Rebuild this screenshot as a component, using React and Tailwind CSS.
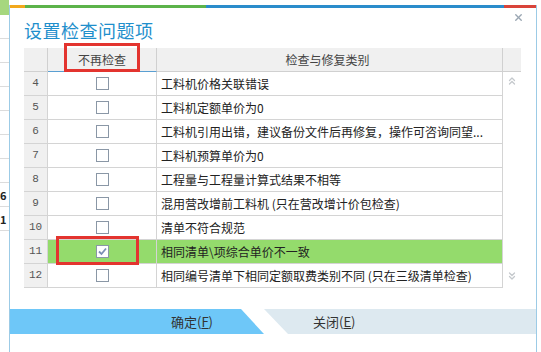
import { ChevronsUp, ChevronsDown, X } from 'lucide-react';

const rows = [
  { n: 4, text: '工料机价格关联错误' },
  { n: 5, text: '工料机定额单价为0' },
  { n: 6, text: '工料机引用出错，建议备份文件后再修复，操作可咨询同望...' },
  { n: 7, text: '工料机预算单价为0' },
  { n: 8, text: '工程量与工程量计算式结果不相等' },
  { n: 9, text: '混用营改增前工料机 (只在营改增计价包检查)' },
  { n: 10, text: '清单不符合规范' },
  { n: 11, text: '相同清单\\项综合单价不一致', checked: true },
  { n: 12, text: '相同编号清单下相同定额取费类别不同 (只在三级清单检查)' },
];

const CheckBox = ({ checked }) => (
  <div className="w-[13px] h-[13px] border border-[#8a97a6] bg-white flex items-center justify-center">
    {checked && (
      <svg width="11" height="11" viewBox="0 0 11 11">
        <path d="M2 5.5 L4.5 8 L9 2.5" fill="none" stroke="#7c8fb5" strokeWidth="1.8" />
      </svg>
    )}
  </div>
);

const App = () => {
  return (
    <div className="w-[541px] h-[352px] bg-white overflow-hidden flex font-['Noto_Sans_CJK_SC',sans-serif] text-[12px] text-[#222]">
      {/* page behind the dialog */}
      <div className="w-[9px] flex flex-col">
        <div className="h-[15px] bg-[#a6d77e]" />
        {[0, 1, 2, 3, 4, 5, 6, 7, 8].map((i) => (
          <div key={i} className="h-[24px] border-b border-[#dcdcdc] text-[11px] leading-[24px] font-bold overflow-hidden">
            {i === 7 ? '6' : i === 8 ? '1' : ''}
          </div>
        ))}
      </div>

      {/* dialog */}
      <div className="mt-[5px] w-[528px] h-[360px] border-l border-r border-[#9ccbe6] flex flex-col">
        <div className="h-[3px] flex">
          <div className="w-[15px] bg-[#f2a81c]" />
          <div className="w-[181px] bg-[#5cb34a]" />
          <div className="flex-1 bg-[#2a8ccb]" />
          <div className="w-[32px] bg-[#d9443a]" />
        </div>

        <div className="flex justify-between pl-[14px] pr-[12px]">
          <div className="pt-[10px] text-[18px] leading-[24px] text-[#1f8fcc] tracking-[0.5px]">设置检查问题项</div>
          <X size={11} strokeWidth={3} className="mt-[4px] text-[#9aa6b2]" />
        </div>

        {/* table */}
        <div className="ml-[14px] mt-[6px] w-[497px] flex">
          <div className="w-[478px] flex flex-col">
            <div className="h-[24px] flex bg-[#f0f0f0] text-[#444] relative">
              <div className="w-[24px] border-r border-b border-[#d0d0d0]" />
              <div className="w-[109px] border-r border-[#d0d0d0] border-b border-b-[#5a9fd2] flex items-center justify-center">不再检查</div>
              <div className="flex-1 border-b border-[#d0d0d0] flex items-center justify-center pr-[4px]">检查与修复类别</div>
              <div className="absolute left-[40px] top-[-5px] w-[76px] h-[29px] border-[3px] border-[#e3342f]" />
            </div>
            {rows.map((r) => (
              <div key={r.n} className="h-[24px] flex border-b border-[#d4d4d4] relative">
                <div className="w-[24px] bg-[#f0f0f0] border-r border-[#d4d4d4] flex items-center justify-center text-[11px] text-[#555] font-['Liberation_Mono',monospace]">
                  {r.n}
                </div>
                <div className={`w-[109px] border-r border-[#d4d4d4] flex items-center justify-center ${r.checked ? 'bg-[#94db6c]' : ''}`}>
                  <CheckBox checked={r.checked} />
                </div>
                <div className={`flex-1 flex items-center pl-[4px] whitespace-nowrap overflow-hidden ${r.checked ? 'bg-[#94db6c]' : ''}`}>
                  {r.text}
                </div>
                {r.checked && (
                  <div className="absolute left-[32px] top-[-4px] w-[83px] h-[29px] border-[3px] border-[#e3342f]" />
                )}
              </div>
            ))}
          </div>
          <div className="w-[19px] flex flex-col">
            <div className="h-[24px] bg-[#f0f0f0] border-l border-b border-[#d0d0d0]" />
            <div className="h-[216px] border-l border-[#d4d4d4] flex flex-col items-center justify-between py-[3px] pb-[6px] text-[#c4c8cc]">
              <ChevronsUp size={12} strokeWidth={2.5} />
              <ChevronsDown size={12} strokeWidth={2.5} />
            </div>
          </div>
        </div>

        {/* buttons */}
        <div className="mt-[21px] h-[25px] flex text-[13px] text-[#333]">
          <div className="w-[254px] bg-[#6ec7f8] [clip-path:polygon(0_0,231px_0,254px_100%,0_100%)] flex items-center justify-center pl-[110px]">
            确定(<span className="underline">F</span>)
          </div>
          <div className="flex-1 bg-[#dde9f0] [clip-path:polygon(0_0,100%_0,100%_100%,24px_100%)] flex items-center pl-[49px]">
            关闭(<span className="underline">E</span>)
          </div>
        </div>
      </div>
    </div>
  );
};

export default App;
